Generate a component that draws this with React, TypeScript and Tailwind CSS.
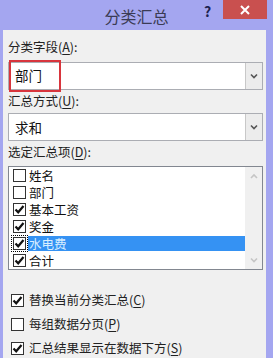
import React from "react";

const font = { fontFamily: '"Noto Sans CJK SC", "Noto Sans", sans-serif' };

function Check({ checked, focus }: { checked: boolean; focus?: boolean }) {
  return (
    <div className={focus ? "p-[1px] outline outline-1 outline-dotted outline-black -m-[1px]" : ""}>
      <div className="w-[13px] h-[13px] border border-[#333] bg-white flex items-center justify-center">
        {checked && (
          <svg width="11" height="11" viewBox="0 0 11 11">
            <path d="M1.5 5.5 L4.2 8.3 L9.5 2" fill="none" stroke="#111" strokeWidth="2.2" />
          </svg>
        )}
      </div>
    </div>
  );
}

function Chevron({ up, color = "#555" }: { up?: boolean; color?: string }) {
  return (
    <svg width="8" height="6" viewBox="0 0 8 6">
      <path d={up ? "M1 5 L4 2 L7 5" : "M1 1.5 L4 4.5 L7 1.5"} fill="none" stroke={color} strokeWidth="1.6" />
    </svg>
  );
}

function Label({ text, k, tail }: { text: string; k: string; tail: string }) {
  return (
    <div className="text-[12.5px] leading-none text-[#222]">
      {text}(<span className="underline underline-offset-2">{k}</span>){tail}
    </div>
  );
}

function Combo({ value, marked }: { value: string; marked?: boolean }) {
  return (
    <div className="relative h-[28px] border border-[#abadb3] bg-white flex">
      <div className="flex-1 flex items-center pl-[6px] text-[13.5px] text-[#111]">{value}</div>
      <div className="w-[17px] border-l border-[#c8c8c8] bg-[#ececec] flex items-center justify-center">
        <Chevron />
      </div>
      {marked && (
        <div className="absolute left-[0px] top-[-3px] w-[52px] h-[32px] border-2 border-[#d8353d]" />
      )}
    </div>
  );
}

const items: [string, boolean][] = [
  ["姓名", false],
  ["部门", false],
  ["基本工资", true],
  ["奖金", true],
  ["水电费", true],
  ["合计", true],
];

export default function App() {
  return (
    <div className="w-[273px] h-[358px] bg-[#a4a6f0] flex flex-col overflow-hidden" style={font}>
      <div className="h-[30px] relative flex items-center justify-center shrink-0">
        <span className="text-[16px] text-[#3b3b55] leading-none mt-[1px]">分类汇总</span>
        <span className="absolute left-[204px] top-[1px] text-[14px] font-bold text-[#1d2250]">?</span>
        <div className="absolute left-[223px] top-0 w-[44px] h-[19px] bg-[#c9504f] flex items-center justify-center">
          <svg width="10" height="10" viewBox="0 0 10 10">
            <path d="M1 1 L9 9 M9 1 L1 9" stroke="#fff" strokeWidth="2" />
          </svg>
        </div>
      </div>
      <div className="flex-1 ml-[3px] mr-[7px] bg-[#f0f0f0] pl-[5px] pr-[3px] flex flex-col">
        <div className="mt-[11px]"><Label text="分类字段" k="A" tail=":" /></div>
        <div className="mt-[8px]"><Combo value="部门" marked /></div>
        <div className="mt-[5px]"><Label text="汇总方式" k="U" tail=":" /></div>
        <div className="mt-[6px]"><Combo value="求和" /></div>
        <div className="mt-[5px]"><Label text="选定汇总项" k="D" tail=":" /></div>
        <div className="mt-[7px] h-[104px] border border-[#828790] bg-white flex overflow-hidden">
          <div className="flex-1 flex flex-col">
            {items.map(([name, c]) => {
              const sel = name === "水电费";
              return (
                <div key={name} className="h-[17px] flex items-center shrink-0 pl-[4px]">
                  <Check checked={c} focus={sel} />
                  <div
                    className={
                      "ml-[2px] flex-1 h-[15px] flex items-center pl-[1px] text-[12.5px] leading-[15px] " +
                      (sel ? "bg-[#3592f3] text-[#d8eeff]" : "text-[#111]")
                    }
                  >
                    {name}
                  </div>
                </div>
              );
            })}
          </div>
          <div className="w-[17px] bg-[#f0f0f0] flex flex-col items-center justify-between py-[6px]">
            <Chevron up color="#c5c5c5" />
            <Chevron color="#c5c5c5" />
          </div>
        </div>
        <div className="flex flex-col gap-[11px] mt-[24px] pl-[3px]">
          <div className="flex items-center gap-[5px]">
            <Check checked />
            <Label text="替换当前分类汇总" k="C" tail="" />
          </div>
          <div className="flex items-center gap-[5px]">
            <Check checked={false} />
            <Label text="每组数据分页" k="P" tail="" />
          </div>
          <div className="flex items-center gap-[5px]">
            <Check checked />
            <Label text="汇总结果显示在数据下方" k="S" tail="" />
          </div>
        </div>
      </div>
    </div>
  );
}
